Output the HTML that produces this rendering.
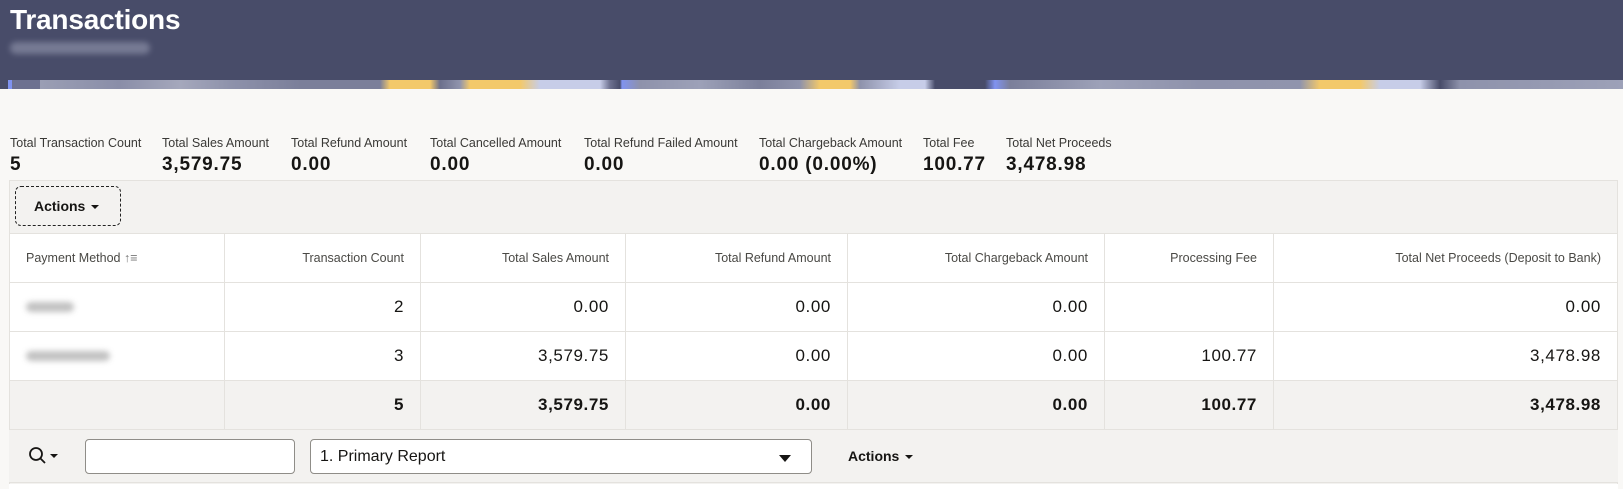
<!DOCTYPE html>
<html><head><meta charset="utf-8"><style>
*{box-sizing:border-box;margin:0;padding:0}
body{width:1623px;height:489px;overflow:hidden;background:#f9f8f6;font-family:"Liberation Sans",sans-serif;color:#161513;position:relative}
.ban{position:absolute;left:0;top:0;width:1623px;height:80px;background:#484c69}
.strip{position:absolute;left:0;top:80px;width:1623px;height:9px;background:linear-gradient(90deg,#484c69 0px,#484c69 8px,#8093f0 8px,#8093f0 12px,#6d7190 12px,#6d7190 40px,#9a9eb4 40px,#8a8ea8 120px,#a5a8bc 180px,#8e92ab 230px,#7b7f9a 300px,#7b7f9a 380px,#f3c96a 390px,#f3c96a 430px,#6b6f8c 440px,#9094ad 460px,#f3c96a 470px,#f3c96a 520px,#c7cde8 540px,#c7cde8 600px,#6d7190 610px,#484c69 620px,#8093f0 622px,#8e92ab 640px,#9da1b8 700px,#7b7f9a 760px,#8e92ab 800px,#f3c96a 820px,#f3c96a 850px,#8e92ab 860px,#c7cde8 900px,#c7cde8 925px,#484c69 935px,#484c69 985px,#8093f0 995px,#7b7f9a 1010px,#9da1b8 1100px,#8e92ab 1200px,#9094ad 1300px,#f3c96a 1320px,#f3c96a 1360px,#c7cde8 1380px,#c7cde8 1420px,#484c69 1440px,#8e92ab 1460px,#9da1b8 1623px)}
h1{position:absolute;left:10px;top:4px;font-size:28px;font-weight:bold;color:#fff;letter-spacing:-0.2px}
.sub{position:absolute;left:10px;top:42px;width:140px;height:12px;background:#8a8ea6;filter:blur(3px);opacity:.7;border-radius:6px}
.sm{position:absolute;top:136px}
.sm .l{font-size:12.5px;color:#3a3936;white-space:nowrap}
.sm .v{font-size:19px;font-weight:bold;margin-top:4px;white-space:nowrap;letter-spacing:0.8px}
.panel{position:absolute;left:9px;top:180px;width:1609px;height:309px;background:#f3f2f0;border:1px solid #e4e2de}
.btn{position:absolute;left:15px;top:186px;width:106px;height:40px;border:1px dashed #222;border-radius:6px;font-size:14px;font-weight:bold;padding:11px 0 0 18px}
.tri{display:inline-block;width:0;height:0;border-left:4px solid transparent;border-right:4px solid transparent;border-top:4px solid #161513;vertical-align:middle;margin-left:6px}
table{position:absolute;left:9px;top:233px;width:1609px;border-collapse:collapse;table-layout:fixed}
td,th{border:1px solid #e4e2de;height:49px;text-align:right;padding:0 16px;font-size:17px;font-weight:normal;letter-spacing:0.6px}
th{font-size:12.5px;color:#4a4945;background:#fff;letter-spacing:0}
td{background:#fff}
tr.t td{background:#f3f2f0;font-weight:bold}
th:first-child{text-align:left}
.blur{display:inline-block;height:10px;background:#999;filter:blur(3px);opacity:.6;border-radius:5px}
.bt{position:absolute;left:9px;top:429px;width:1609px;height:54px;background:#f3f2f0;border-top:1px solid #e4e2de;border-bottom:1px solid #e4e2de}
.white{position:absolute;left:9px;top:484px;width:1609px;height:5px;background:#fff}
.inp{position:absolute;left:85px;top:439px;width:210px;height:35px;background:#fff;border:1px solid #8f8d88;border-radius:4px}
.sel{position:absolute;left:310px;top:439px;width:502px;height:35px;background:#fff;border:1px solid #8f8d88;border-radius:4px;font-size:16px;padding:8px 9px}
.sel .tri{position:absolute;right:20px;top:15px;border-left-width:6px;border-right-width:6px;border-top-width:7px}
</style></head><body>
<div class="ban"></div><div class="strip"></div>
<h1>Transactions</h1><div class="sub"></div>
<div class="sm" style="left:10px"><div class="l">Total Transaction Count</div><div class="v">5</div></div>
<div class="sm" style="left:162px"><div class="l">Total Sales Amount</div><div class="v">3,579.75</div></div>
<div class="sm" style="left:291px"><div class="l">Total Refund Amount</div><div class="v">0.00</div></div>
<div class="sm" style="left:430px"><div class="l">Total Cancelled Amount</div><div class="v">0.00</div></div>
<div class="sm" style="left:584px"><div class="l">Total Refund Failed Amount</div><div class="v">0.00</div></div>
<div class="sm" style="left:759px"><div class="l">Total Chargeback Amount</div><div class="v">0.00 (0.00%)</div></div>
<div class="sm" style="left:923px"><div class="l">Total Fee</div><div class="v">100.77</div></div>
<div class="sm" style="left:1006px"><div class="l">Total Net Proceeds</div><div class="v">3,478.98</div></div>
<div class="panel"></div>
<div class="btn">Actions<span class="tri"></span></div>
<table>
<colgroup><col style="width:215px"><col style="width:196px"><col style="width:205px"><col style="width:222px"><col style="width:257px"><col style="width:169px"><col></colgroup>
<tr><th>Payment Method <span style="color:#777">↑≡</span></th><th>Transaction Count</th><th>Total Sales Amount</th><th>Total Refund Amount</th><th>Total Chargeback Amount</th><th>Processing Fee</th><th>Total Net Proceeds (Deposit to Bank)</th></tr>
<tr><td style="text-align:left"><span class="blur" style="width:48px"></span></td><td>2</td><td>0.00</td><td>0.00</td><td>0.00</td><td></td><td>0.00</td></tr>
<tr><td style="text-align:left"><span class="blur" style="width:84px"></span></td><td>3</td><td>3,579.75</td><td>0.00</td><td>0.00</td><td>100.77</td><td>3,478.98</td></tr>
<tr class="t"><td></td><td>5</td><td>3,579.75</td><td>0.00</td><td>0.00</td><td>100.77</td><td>3,478.98</td></tr>
</table>
<div class="bt"></div><div class="white"></div>
<svg style="position:absolute;left:28px;top:446px" width="20" height="20" viewBox="0 0 20 20"><circle cx="8" cy="8" r="6" fill="none" stroke="#161513" stroke-width="1.8"/><path d="M12.5 12.5 L17 17" stroke="#161513" stroke-width="1.8"/></svg>
<span class="tri" style="position:absolute;left:50px;top:454px;margin:0"></span>
<div class="inp"></div>
<div class="sel">1. Primary Report<span class="tri"></span></div>
<div style="position:absolute;left:848px;top:448px;font-size:14px;font-weight:bold">Actions<span class="tri"></span></div>
</body></html>
